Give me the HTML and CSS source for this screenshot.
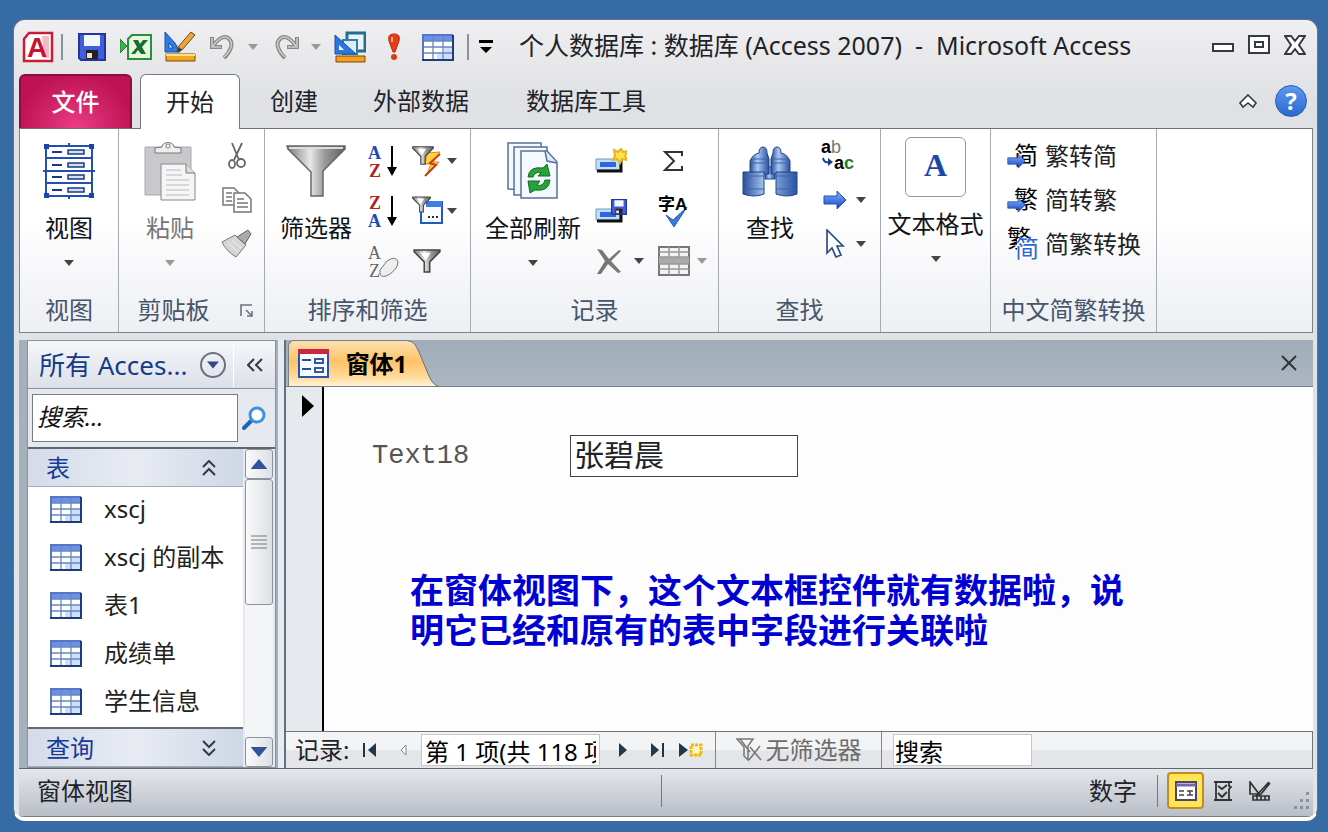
FILE: index.html
```html
<!DOCTYPE html>
<html lang="zh-CN">
<head>
    <meta charset="UTF-8">
    <meta name="viewport" content="width=device-width, initial-scale=1.0">
    <title>个人数据库 : 数据库 (Access 2007) - Microsoft Access</title>
    <link rel="stylesheet" href="styles.css">
</head>
<body>
    <!-- shared icons -->
    <svg class="sprite" aria-hidden="true">
        <defs>
            <linearGradient id="steel" x1="0" x2="1"><stop offset="0" stop-color="#777"/><stop offset=".4" stop-color="#e8e8e8"/><stop offset=".65" stop-color="#999"/><stop offset="1" stop-color="#606060"/></linearGradient>
            <linearGradient id="blue" x1="0" y1="0" x2="0" y2="1"><stop offset="0" stop-color="#7fb6ff"/><stop offset="1" stop-color="#1743c4"/></linearGradient>
            <linearGradient id="tube" x1="0" x2="1"><stop offset="0" stop-color="#2a4d98"/><stop offset=".4" stop-color="#a9c8f5"/><stop offset="1" stop-color="#27509f"/></linearGradient>
            <linearGradient id="tabfill" x1="0" y1="0" x2="0" y2="1"><stop offset="0" stop-color="#fce0b0"/><stop offset=".45" stop-color="#ffc267"/><stop offset=".8" stop-color="#ffdb9a"/><stop offset="1" stop-color="#fff1d4"/></linearGradient>
        </defs>
        <symbol id="down" viewBox="0 0 10 6"><path d="M0 0H10L5 6Z" fill="currentColor"/></symbol>
        <symbol id="grid" viewBox="0 0 32 27">
            <path d="M1 1H31V26H1Z" fill="#fff"/><path d="M1 1H31V7H1Z" fill="#6d8fe6"/><path d="M22 13H31V26H15V19H22Z" fill="#cfe0ff"/>
            <path d="M1 7H31M1 13H31M1 19H31M11 1V26M21 1V26" stroke="#6887bd" stroke-width="1.3" fill="none"/>
            <path d="M1 26V1H31" stroke="#5577c4" stroke-width="2" fill="none"/><path d="M31 1V26H0" stroke="#1d3c7c" stroke-width="2" fill="none"/>
        </symbol>
        <symbol id="arrow" viewBox="0 0 24 20"><path d="M1 6H14V1L23 10L14 19V14H1Z" fill="url(#blue)" stroke="#2450ae"/></symbol>
        <symbol id="funnel" viewBox="0 0 60 52"><path d="M1 1H59V4L37 26V51H25V27L2 4Z" fill="url(#steel)" stroke="#666" stroke-width="1.5"/><path d="M3 3H57" stroke="#ddd" stroke-width="2"/></symbol>
        <symbol id="funnel-small" viewBox="0 0 30 26"><path d="M1 1H29V3L18 14V25H12V14L1 3Z" fill="url(#steel)" stroke="#444" stroke-width="1.6"/><path d="M8 4H19L14 12Z" fill="#fff"/></symbol>
        <symbol id="ruler" viewBox="0 0 32 32">
            <path d="M1 1V21L16 21L11 12Z" fill="#2f7be0" stroke="#1550b0"/><path d="M5 12V17H9Z" fill="#fff" stroke="#154b9b"/>
            <path d="M27 1L31 4L18 19L13 21L14 16Z" fill="#eda63a" stroke="#774611"/><path d="M13 21L15 16L18 19Z" fill="#333"/>
            <path d="M2 23H31V30H2Z" fill="#f3a71e" stroke="#774711"/><path d="M2 24H31" stroke="#ffe27a" stroke-width="2"/>
        </symbol>
        <symbol id="floppy" viewBox="0 0 28 28"><path d="M1 1H27V27H3L1 25Z" fill="#3f5edb" stroke="#25349a" stroke-width="2"/><path d="M6 2H22V13H6Z" fill="#f2f7ff"/><path d="M8 17H20V26H8Z" fill="#222"/><path d="M9 20H14V25H9Z" fill="#f6dfc5"/></symbol>
        <symbol id="undo" viewBox="0 0 26 26"><path d="M2 3V13H12M3 12C7 6 13 1 18 4C25 9 20 18 14 24" fill="none" stroke="#888" stroke-width="4"/><path d="M2 4V13H11M3 12C7 6 13 1 18 4C25 9 20 18 14 23" fill="none" stroke="#ccc" stroke-width="1.5"/></symbol>
    </svg>

    <main class="window">
        <header class="titlebar">
            <svg class="logo" viewBox="0 0 32 32"><path d="M7 2H30V30H2V8Z" fill="#fff" stroke="#c81d35" stroke-width="2.5"/><path d="M20 5H27V27H22Z" fill="#f5b9c4"/><text x="5" y="26" class="logo-letter">A</text></svg>
            <span class="divider"></span>
            <nav class="quick" aria-label="快速访问工具栏">
                <button aria-label="保存"><svg width="28" height="28"><use href="#floppy"/></svg></button>
                <button aria-label="导出到 Excel"><svg width="32" height="28" viewBox="0 0 32 28"><path d="M12 2H31V26H8V6Z" fill="#eaf6df" stroke="#24913e" stroke-width="2"/><path d="M13 7H18L20 11L23 7H28L22 14L26 21H21L18 17L15 21H11L17 14Z" fill="#176f2e"/><path d="M0 6L7 13L0 20Z" fill="#3bb54a" stroke="#157b27"/></svg></button>
                <button aria-label="设计视图"><svg width="32" height="32"><use href="#ruler"/></svg></button>
                <button class="split" aria-label="撤消"><svg width="26" height="26"><use href="#undo"/></svg><svg class="caret pale"><use href="#down"/></svg></button>
                <button class="split" aria-label="恢复"><svg class="flip" width="26" height="26"><use href="#undo"/></svg><svg class="caret pale"><use href="#down"/></svg></button>
                <button aria-label="窗体设计"><svg width="32" height="32" viewBox="0 0 32 32"><path d="M13 2H31V20H13Z" fill="#e9f5fb" stroke="#246f91" stroke-width="3"/><path d="M9 9H23V23H9Z" fill="#dceef9" stroke="#327ea5" stroke-width="2"/><path d="M1 4V23H22Z" fill="#2c76dc" stroke="#1550ae"/><path d="M5 14V19H10Z" fill="#fff"/><path d="M2 25H31V31H2Z" fill="#f4a01c" stroke="#7c4410"/></svg></button>
                <button aria-label="运行"><svg width="14" height="28" viewBox="0 0 14 28"><path d="M7 1C12 1 13 4 12 8L8 19H6L2 8C1 4 2 1 7 1Z" fill="#ea3b14" stroke="#b62a11"/><circle cx="7" cy="24" r="3" fill="#df3814"/><path d="M5 4V9" stroke="#ffac75" stroke-width="2"/></svg></button>
                <button aria-label="数据表视图"><svg width="32" height="27"><use href="#grid"/></svg></button>
            </nav>
            <span class="divider"></span>
            <button class="customize" aria-label="自定义快速访问工具栏"><svg width="16" height="14" viewBox="0 0 16 14"><path d="M1 0H15V3H1ZM2 7H14L8 13Z"/></svg></button>
            <h1>个人数据库 : 数据库 (Access 2007)&nbsp; -&nbsp; Microsoft Access</h1>
            <div class="window-controls">
                <button aria-label="最小化"><svg width="22" height="22" viewBox="0 0 22 22"><path d="M1 10H21V17H1Z"/></svg></button>
                <button aria-label="还原"><svg width="22" height="22" viewBox="0 0 22 22"><path d="M1 2H21V19H1ZM7 8H15V13H7Z"/></svg></button>
                <button aria-label="关闭"><svg width="22" height="22" viewBox="0 0 22 22"><path d="M1 2H7L11 7L15 2H21L15 11L21 20H15L11 15L7 20H1L7 11Z"/></svg></button>
            </div>
        </header>

        <nav class="tabs" aria-label="功能区">
            <button class="tab file">文件</button>
            <button class="tab active">开始</button>
            <button class="tab">创建</button>
            <button class="tab wide">外部数据</button>
            <button class="tab wider">数据库工具</button>
            <div class="tabs-end">
                <button aria-label="折叠功能区"><svg width="18" height="16" viewBox="0 0 18 16"><path d="M9 2L17 10L14 14L9 10L4 14L1 10Z" fill="#fff" stroke="#333c46" stroke-width="1.6"/></svg></button>
                <button class="help" aria-label="帮助">?</button>
            </div>
        </nav>

        <section class="ribbon">
            <section class="group g-view">
                <div class="tools">
                    <button class="big">
                        <svg width="52" height="58" viewBox="0 0 52 58"><path d="M3 4H49V54H3ZM3 16H49M3 29H49M3 41H49M26 1V4M26 54V57M0 29H3M49 29H52" fill="none" stroke="#2350b0" stroke-width="2"/><path d="M9 10H19M9 23H19M9 35H19M9 48H19" stroke="#1b3b83" stroke-width="2"/><path d="M25 8H41V12H25ZM25 21H41V25H25ZM25 33H41V37H25ZM25 46H41V50H25Z" fill="#cfe1fa" stroke="#1b3b83" stroke-width="1.5"/><path d="M1 2H6V7H1ZM46 2H51V7H46ZM1 51H6V56H1ZM46 51H51V56H46Z" fill="#1745ae"/></svg>
                        <span>视图</span><svg class="caret"><use href="#down"/></svg>
                    </button>
                </div>
                <h2>视图</h2>
            </section>
            <section class="group g-clip">
                <div class="tools">
                    <button class="big faded">
                        <svg width="52" height="60" viewBox="0 0 52 60"><path d="M1 6H47V54H1Z" fill="#c9c9cd" stroke="#aaa"/><path d="M11 12V7L18 6C18 0 30 0 30 6L37 7V12Z" fill="#eee" stroke="#777"/><circle cx="24" cy="5" r="2" fill="#fff" stroke="#777"/><path d="M17 23H42L51 32V59H17Z" fill="#f5f5f7" stroke="#888"/><path d="M42 23V32H51" fill="#ddd" stroke="#777"/><path d="M22 29H37M22 34H38M22 39H45M22 44H45M22 49H45M22 54H45" stroke="#bbb"/></svg>
                        <span>粘贴</span><svg class="caret pale"><use href="#down"/></svg>
                    </button>
                    <div class="small-col tight">
                        <button aria-label="剪切"><svg width="20" height="28" viewBox="0 0 20 28" fill="none" stroke="#666" stroke-width="1.8"><path d="M5 1L12 18M15 1L7 18"/><ellipse cx="5" cy="22" rx="3" ry="4"/><ellipse cx="14" cy="21" rx="4" ry="4"/></svg></button>
                        <button aria-label="复制"><svg width="30" height="26" viewBox="0 0 30 26" fill="#fff" stroke="#777" stroke-width="1.5"><path d="M1 1H12L17 6V18H1Z"/><path d="M12 6H23L29 12V25H12Z"/><path d="M4 6H10M4 10H10M4 14H10M15 12H22M15 16H26M15 20H26"/></svg></button>
                        <button aria-label="格式刷"><svg width="32" height="30" viewBox="0 0 32 30"><path d="M1 13L14 6L25 16L15 28Q5 22 1 13Z" fill="#d6d6d6" stroke="#777"/><path d="M16 8L27 1L30 5L24 15Z" fill="#aaa" stroke="#666"/><path d="M7 14L17 23M11 11L20 19" stroke="#eee"/></svg></button>
                    </div>
                </div>
                <h2>剪贴板</h2>
                <button class="launcher" aria-label="剪贴板选项"><svg width="14" height="14" viewBox="0 0 14 14"><path d="M1 12V1H12M6 6L12 12M12 7V12H7" fill="none" stroke="#677483" stroke-width="1.6"/></svg></button>
            </section>
            <section class="group g-sort">
                <div class="tools">
                    <button class="big"><svg width="60" height="60" viewBox="0 -4 60 60"><use href="#funnel" width="60" height="52"/></svg><span>筛选器</span></button>
                    <div class="small-col">
                        <button aria-label="升序"><svg width="32" height="36" viewBox="0 0 32 36"><text x="1" y="16" class="az blue-t">A</text><text x="2" y="34" class="az red-t">Z</text><path d="M25 3V26" stroke="#000" stroke-width="2"/><path d="M20 24H30L25 33Z"/></svg></button>
                        <button aria-label="降序"><svg width="32" height="36" viewBox="0 0 32 36"><text x="2" y="16" class="az red-t">Z</text><text x="1" y="34" class="az blue-t">A</text><path d="M25 3V26" stroke="#000" stroke-width="2"/><path d="M20 24H30L25 33Z"/></svg></button>
                        <button aria-label="取消排序"><svg width="32" height="36" viewBox="0 0 32 36"><text x="1" y="16" class="az thin-t">A</text><text x="2" y="34" class="az thin-t">Z</text><path d="M13 27L20 18Q29 12 31 19Q31 25 23 31Q15 36 13 31Z" fill="#eee" stroke="#777"/></svg></button>
                    </div>
                    <div class="small-col carets">
                        <button aria-label="选择"><svg width="30" height="32" viewBox="0 0 30 32"><path d="M15 8L28 7L21 17H27L14 31L19 19H13Z" fill="#ffd23c" stroke="#dd852a"/><path d="M28 9L18 18L24 20L13 31" fill="none" stroke="#ca3b17" stroke-width="2"/><use href="#funnel-small" x="0" y="1" width="22" height="19"/></svg><svg class="caret"><use href="#down"/></svg></button>
                        <button aria-label="高级"><svg width="31" height="32" viewBox="0 0 31 32"><path d="M9 7H30V28H9Z" fill="#f8fbff" stroke="#2458be" stroke-width="2"/><path d="M14 6H30V12H14Z" fill="#3c7ee4"/><path d="M16 22H18M20 22H22M24 22H26" stroke="#234" stroke-width="2"/><use href="#funnel-small" x="0" y="1" width="19" height="17"/></svg><svg class="caret"><use href="#down"/></svg></button>
                        <button aria-label="切换筛选"><svg width="30" height="24"><use href="#funnel-small"/></svg></button>
                    </div>
                </div>
                <h2>排序和筛选</h2>
            </section>
            <section class="group g-records">
                <div class="tools">
                    <button class="big">
                        <svg width="52" height="58" viewBox="0 0 52 58"><g fill="#f5f9ff" stroke="#55719b" stroke-width="1.5"><path d="M1 1H34V49L1 47Z"/><path d="M7 5H40V53H7Z"/><path d="M14 9H40L50 20V56H14Z"/><path d="M38 9L40 19L50 21" fill="#dceaff"/></g><path d="M21 35Q22 24 36 26L40 22L43 34H31L34 31Q28 29 26 35Z" fill="#27a33a" stroke="#116a22"/><path d="M43 38Q42 50 28 48L23 51L21 39H33L30 43Q36 45 38 38Z" fill="#27a33a" stroke="#116a22"/></svg>
                        <span>全部刷新</span><svg class="caret"><use href="#down"/></svg>
                    </button>
                    <div class="small-col carets">
                        <button aria-label="新建"><svg width="32" height="26" viewBox="0 0 32 26"><path d="M1 11H25V22H1Z" fill="#bfe2fb" stroke="#6e98c0"/><path d="M5 14H21V19H5Z" fill="#2e66df"/><path d="M2 23H26V12" fill="none" stroke="#111" stroke-width="3"/><path d="M19 2L23 4L26 1L28 4L32 3L30 8L32 12L27 11L25 15L22 11L18 12L20 8Z" fill="#ffe157" stroke="#eab316" stroke-width="2"/></svg></button>
                        <button aria-label="保存记录"><svg width="32" height="26" viewBox="0 0 32 26"><path d="M1 11H25V22H1Z" fill="#bfe2fb" stroke="#6e98c0"/><path d="M5 14H21V19H5Z" fill="#2e66df"/><path d="M2 23H26V12" fill="none" stroke="#111" stroke-width="3"/><use href="#floppy" x="16" y="1" width="16" height="16"/></svg></button>
                        <button aria-label="删除"><svg width="28" height="28" viewBox="0 0 26 28"><path d="M1 2L6 3L13 12L23 3L25 4L15 14L25 25L22 26L12 17L5 27H1L9 14Z" fill="#777"/></svg><svg class="caret"><use href="#down"/></svg></button>
                    </div>
                    <div class="small-col carets">
                        <button aria-label="合计"><svg width="32" height="26" viewBox="0 0 32 26"><path d="M24 8V4H7L16 13L7 22H24V18" fill="none" stroke="#333" stroke-width="2"/></svg></button>
                        <button aria-label="拼写检查"><svg width="32" height="36" viewBox="0 0 32 36"><path d="M8 22L15 27L29 14L16 34Z" fill="#3b78e0" stroke="#2b5ebf"/><text x="0" y="17" class="spell">字A</text></svg></button>
                        <button class="faded" aria-label="其他"><svg width="32" height="30" viewBox="0 0 32 30"><path d="M1 1H31V29H1Z" fill="#f3f3f3" stroke="#777" stroke-width="2"/><path d="M1 11H31V18H1Z" fill="#aaa"/><path d="M1 6H31M1 11H31M1 18H31M1 23H31M11 1V11M21 1V11M11 18V29M21 18V29" stroke="#999" stroke-width="1.5"/></svg><svg class="caret pale"><use href="#down"/></svg></button>
                    </div>
                </div>
                <h2>记录</h2>
            </section>
            <section class="group g-find">
                <div class="tools">
                    <button class="big">
                        <svg width="56" height="56" viewBox="0 0 56 56"><g stroke="#1f4389" fill="url(#tube)"><path d="M23 24H33V36H23Z"/><path d="M17 10Q17 4 21 4Q25 4 25 10L27 16V31H8V18Q11 11 17 10Z"/><path d="M31 10Q31 4 35 4Q39 4 39 10Q45 11 48 18V31H29V16Z"/><path d="M1 29H22V51Q12 55 1 51ZM34 29H55V51Q45 55 34 51Z"/></g><path d="M11 16H25M31 16H45M8 20H26M30 20H48M1 33H22M34 33H55M1 46H22M34 46H55" stroke="#3b62b2"/></svg>
                        <span>查找</span>
                    </button>
                    <div class="small-col tight carets">
                        <button aria-label="替换"><svg width="34" height="36" viewBox="0 0 34 36"><text x="0" y="15" class="swap">a<tspan class="light">b</tspan></text><path d="M2 20Q3 25 8 24" fill="none" stroke="#173e93" stroke-width="2"/><path d="M7 20L12 24L7 28Z" fill="#173e93"/><text x="13" y="31" class="swap">a<tspan class="green">c</tspan></text></svg></button>
                        <button aria-label="转至"><svg width="26" height="20" viewBox="-2 0 26 20"><use href="#arrow" width="24" height="20"/></svg><svg class="caret"><use href="#down"/></svg></button>
                        <button aria-label="选择"><svg width="24" height="30" viewBox="-4 0 24 30"><path d="M2 1V24L7 19L11 28L16 26L12 17H18Z" fill="#fff" stroke="#2c4d80" stroke-width="1.7"/></svg><svg class="caret"><use href="#down"/></svg></button>
                    </div>
                </div>
                <h2>查找</h2>
            </section>
            <section class="group g-format">
                <div class="tools">
                    <button class="big"><span class="letter-box">A</span><span>文本格式</span><svg class="caret"><use href="#down"/></svg></button>
                </div>
            </section>
            <section class="group g-chinese">
                <div class="tools">
                    <div class="text-col">
                        <button><svg width="32" height="36" viewBox="0 0 32 36"><text x="7" y="26" class="han">简</text><use href="#arrow" x="0" y="15" width="19" height="16"/></svg>繁转简</button>
                        <button><svg width="32" height="36" viewBox="0 0 32 36"><text x="7" y="26" class="han">繁</text><use href="#arrow" x="0" y="15" width="19" height="16"/></svg>简转繁</button>
                        <button><svg width="32" height="36" viewBox="0 0 32 36"><text x="0" y="21" class="han">繁</text><path d="M10 13H30V33H10Z" fill="#fff"/><text x="8" y="31" class="han blue-han">简</text></svg>简繁转换</button>
                    </div>
                </div>
                <h2>中文简繁转换</h2>
            </section>
        </section>

        <div class="workspace">
            <aside class="nav-pane">
                <div class="pane-head">
                    <span class="pane-title">所有 Acces...</span>
                    <button class="round" aria-label="浏览类别"><svg width="12" height="8"><use href="#down"/></svg></button>
                    <button class="shutter" aria-label="收起导航窗格"><svg width="16" height="14" viewBox="0 0 16 14"><path d="M7 1L1 7L7 13M15 1L9 7L15 13"/></svg></button>
                </div>
                <div class="pane-search">
                    <input type="text" placeholder="搜索..." aria-label="搜索">
                    <button aria-label="搜索"><svg width="24" height="24" viewBox="0 0 24 24"><path d="M2 22L10 14" stroke="#1c62b8" stroke-width="4" stroke-linecap="round"/><circle cx="15" cy="9" r="7" fill="#fff" stroke="#3c93e0" stroke-width="3"/></svg></button>
                </div>
                <div class="pane-body">
                    <div class="objects">
                        <button class="category">表<svg width="16" height="16" viewBox="0 0 16 16"><path d="M2 7L8 1L14 7M2 15L8 9L14 15"/></svg></button>
                        <ul>
                            <li><a href="#"><svg width="32" height="27"><use href="#grid"/></svg>xscj</a></li>
                            <li><a href="#"><svg width="32" height="27"><use href="#grid"/></svg>xscj 的副本</a></li>
                            <li><a href="#"><svg width="32" height="27"><use href="#grid"/></svg>表1</a></li>
                            <li><a href="#"><svg width="32" height="27"><use href="#grid"/></svg>成绩单</a></li>
                            <li><a href="#"><svg width="32" height="27"><use href="#grid"/></svg>学生信息</a></li>
                        </ul>
                        <button class="category queries">查询<svg width="16" height="16" viewBox="0 0 16 16"><path d="M2 1L8 7L14 1M2 9L8 15L14 9"/></svg></button>
                    </div>
                    <div class="scrollbar">
                        <button aria-label="向上滚动"><svg class="flip-y" width="18" height="10"><use href="#down" width="18" height="10"/></svg></button>
                        <div class="thumb"><svg width="16" height="14" viewBox="0 0 16 14"><path d="M0 1H16M0 5H16M0 9H16M0 13H16" stroke="#777"/></svg></div>
                        <button class="scroll-down" aria-label="向下滚动"><svg width="18" height="10"><use href="#down" width="18" height="10"/></svg></button>
                    </div>
                </div>
            </aside>

            <section class="document">
                <div class="doc-tabs">
                    <button class="doc-tab">
                        <svg width="32" height="30" viewBox="0 0 32 30"><path d="M1 2H30V28H1Z" fill="#f7faff" stroke="#2754ae" stroke-width="2"/><path d="M0 0H31V5H0Z" fill="#c8273d"/><path d="M4 11H13M4 20H13" stroke="#244e9b" stroke-width="2"/><path d="M17 10H25V14H17ZM17 19H25V23H17Z" fill="#fff" stroke="#3159a1" stroke-width="2"/></svg>
                        窗体1
                    </button>
                    <svg class="tab-tail" width="30" height="46" viewBox="0 0 30 46"><path d="M0 1C6 1 8 6 11 12L21 36Q25 45 30 46H0Z" fill="url(#tabfill)"/><path d="M0 1C6 1 8 6 11 12L21 36Q25 45 30 46" fill="none" stroke="#64717f"/></svg>
                    <button class="doc-close" aria-label="关闭窗体"><svg width="16" height="16" viewBox="0 0 16 16"><path d="M1 1L15 15M15 1L1 15" stroke="#333" stroke-width="2"/></svg></button>
                </div>
                <div class="form-view">
                    <div class="selector"><svg width="12" height="22" viewBox="0 0 12 22"><path d="M0 0L12 11L0 22Z"/></svg></div>
                    <div class="form-body">
                        <div class="field">
                            <label for="text18">Text18</label>
                            <input id="text18" type="text" value="张碧晨">
                        </div>
                        <p class="note">在窗体视图下，这个文本框控件就有数据啦，说明它已经和原有的表中字段进行关联啦</p>
                    </div>
                </div>
                <div class="record-nav">
                    <label for="record">记录:</label>
                    <button aria-label="第一条记录"><svg width="14" height="14" viewBox="0 0 14 14"><path d="M1 0V14" stroke="#234" stroke-width="2"/><path d="M13 0V14L5 7Z"/></svg></button>
                    <button class="prev" aria-label="上一条记录"><svg width="8" height="14" viewBox="0 0 8 14"><path d="M6 2V12L1 7Z" fill="#fff" stroke="#888"/></svg></button>
                    <input id="record" type="text" value="第 1 项(共 118 项)">
                    <button aria-label="下一条记录"><svg width="10" height="14" viewBox="0 0 10 14"><path d="M1 0V14L9 7Z"/></svg></button>
                    <button aria-label="最后一条记录"><svg width="14" height="14" viewBox="0 0 14 14"><path d="M13 0V14" stroke="#234" stroke-width="2"/><path d="M1 0V14L9 7Z"/></svg></button>
                    <button aria-label="新记录"><svg width="26" height="16" viewBox="0 0 26 16"><path d="M1 1V15L10 8Z"/><path d="M13 3H23V13H13Z" fill="#fff8c6" stroke="#f2b51b" stroke-width="3" stroke-dasharray="3 1"/></svg></button>
                    <button class="no-filter" disabled><svg width="26" height="24" viewBox="0 0 26 24" fill="none" stroke="#777" stroke-width="1.5"><path d="M1 1H17L12 8V22L8 18V9ZM4 1L14 14M14 9L25 22M24 8L13 22"/></svg>无筛选器</button>
                    <input class="record-search" type="text" value="搜索" aria-label="搜索记录">
                </div>
            </section>
        </div>

        <footer class="status">
            <span class="mode">窗体视图</span>
            <span class="num">数字</span>
            <div class="views">
                <button class="current" aria-label="窗体视图"><svg width="24" height="20" viewBox="0 0 22 20"><path d="M1 1H21V19H1Z" fill="#fff" stroke="#4c4669" stroke-width="2"/><path d="M1 4H21" stroke="#7a63b5" stroke-width="3"/><path d="M4 10H9M4 14H9M12 10H18M12 14H18M15 10V14" stroke="#444" stroke-width="1.5"/></svg></button>
                <button aria-label="布局视图"><svg width="18" height="20" viewBox="0 0 18 20" fill="none" stroke="#333" stroke-width="1.8"><path d="M0 1H18M0 19H18M2 1V19M15 1V5L17 6L15 8V19M4 5L8 8L13 4M4 12L8 16L13 11"/></svg></button>
                <button aria-label="设计视图"><svg width="22" height="20" viewBox="0 0 22 20" fill="none" stroke="#333" stroke-width="1.7"><path d="M1 1V13L10 13ZM20 1L8 14L12 13L21 2M4 15H20V19H4ZM8 15V19M12 15V19M16 15V19"/></svg></button>
            </div>
            <svg class="grip" width="20" height="22" viewBox="0 0 20 22" fill="#8b929d"><path d="M14 2H17V5H14ZM8 9H11V12H8ZM14 9H17V12H14ZM2 16H5V19H2ZM8 16H11V19H8ZM14 16H17V19H14Z"/></svg>
        </footer>
    </main>
</body>
</html>
```

FILE: styles.css
```css
* {
    box-sizing: border-box;
}

body {
    margin: 0;
    min-height: 100vh;
    display: flex;
    padding: 19px 10px 11px 13px;
    background: #376ba4;
    font-family: "Noto Sans", "Noto Sans CJK SC", sans-serif;
    font-size: 24px;
    line-height: 32px;
    color: #1d2329;
}

button, input {
    font: inherit;
    color: inherit;
}

button {
    display: flex;
    align-items: center;
    justify-content: center;
    padding: 0;
    border: 0;
    background: none;
    white-space: nowrap;
}

svg {
    flex: none;
}

h1, h2, ul, p {
    margin: 0;
    padding: 0;
    font-weight: 400;
}

.sprite {
    position: absolute;
    width: 0;
    height: 0;
}

.window {
    flex: 1;
    min-width: 0;
    display: flex;
    flex-direction: column;
    border: 1px solid #657589;
    border-bottom: 4px solid #fff;
    border-radius: 12px;
    padding: 0 4px 0 5px;
    background: linear-gradient(#f0eff1, #dfe1e4 80px, #e1e5e9);
    overflow: hidden;
}

/* title bar */
.titlebar {
    display: flex;
    align-items: center;
    height: 54px;
    padding-left: 3px;
}

.logo {
    width: 32px;
    height: 32px;
}

.logo-letter {
    font: bold 28px "Liberation Sans", sans-serif;
    fill: #c3152f;
}

.divider {
    width: 2px;
    height: 26px;
    margin: 0 7px;
    background: #89929b;
}

.quick {
    display: flex;
}

.quick button {
    width: 44px;
}

.quick .split {
    width: 63px;
    gap: 12px;
}

.flip {
    transform: scaleX(-1);
}

.flip-y {
    transform: scaleY(-1);
}

.caret {
    width: 10px;
    height: 6px;
    color: #444;
}

.caret.pale {
    color: #999;
}

.customize {
    width: 20px;
}

h1 {
    margin-left: 23px;
    padding-bottom: 4px;
    font-size: 25px;
    white-space: nowrap;
}

.window-controls {
    display: flex;
    gap: 14px;
    margin-left: auto;
    padding: 0 7px 4px 0;
}

.window-controls svg {
    fill: #fff;
    stroke: #343b44;
    stroke-width: 2;
}

/* ribbon tabs */
.tabs {
    display: flex;
    height: 55px;
    border-bottom: 1px solid #6d7680;
}

.tab {
    width: 108px;
}

.tab.file {
    width: 113px;
    margin-right: 8px;
    border: 2px solid #8e0c42;
    border-bottom: 0;
    border-radius: 6px 6px 0 0;
    background: radial-gradient(ellipse at bottom, #ec3d83, #bd1254 75%);
    color: #fff;
    font-weight: 500;
}

.tab.active {
    width: 100px;
    height: 55px;
    border: 1px solid #707b85;
    border-bottom: 0;
    border-radius: 6px 6px 0 0;
    background: #fff;
}

.tab.wide {
    width: 146px;
}

.tab.wider {
    width: 184px;
}

.tabs-end {
    display: flex;
    align-items: center;
    gap: 18px;
    margin-left: auto;
    padding-right: 6px;
}

.help {
    width: 32px;
    height: 32px;
    border: 1px solid #275cb8;
    border-radius: 50%;
    background: linear-gradient(#5b9af0, #2c68d0);
    color: #fff;
    font-weight: 700;
}

/* ribbon */
.ribbon {
    display: flex;
    height: 204px;
    border: 1px solid #7c858f;
    border-top: 0;
    background: linear-gradient(#fff 45%, #fafafc 60%, #edeff3);
}

.group {
    position: relative;
    display: flex;
    flex-direction: column;
    border-right: 1px solid #a4abb4;
}

.tools {
    display: flex;
    flex: 1;
}

.group h2 {
    height: 38px;
    font-size: 24px;
    color: #46566c;
    text-align: center;
    white-space: nowrap;
}

.g-view { width: 99px; }
.g-clip { width: 146px; }
.g-sort { width: 206px; }
.g-records { width: 248px; }
.g-find { width: 162px; }
.g-format { width: 110px; }
.g-chinese { width: 166px; }

.g-clip h2 {
    padding-right: 36px;
}

.big {
    flex-direction: column;
    justify-content: flex-start;
    width: 102px;
    padding-top: 12px;
    color: #101418;
}

.g-view .big {
    width: 98px;
}

.g-records .big {
    width: 124px;
}

.g-format .big {
    width: 109px;
    padding-top: 8px;
}

.big span {
    height: 32px;
    margin-top: 11px;
}

.big .caret {
    margin-top: 16px;
}

.big > svg:first-child {
    height: 60px;
}

.faded {
    color: #777;
}

.letter-box {
    width: 61px;
    border: 1px solid #9098a2;
    border-radius: 6px;
    background: #fff;
    color: #1b48a6;
    font: bold 32px/54px "Liberation Serif", serif;
}

.big .letter-box {
    height: 60px;
    margin-top: 0;
}

.small-col {
    display: flex;
    flex-direction: column;
    padding-top: 7px;
}

.small-col button {
    width: 32px;
    height: 50px;
}

.small-col.carets button {
    width: 45px;
    justify-content: space-between;
}

.small-col.tight {
    padding-top: 5px;
}

.small-col.tight button {
    height: 44px;
}

.g-sort .carets {
    margin-left: 13px;
}

.small-col.carets + .carets {
    margin-left: 14px;
}

.g-records .carets button {
    width: 49px;
}

.az {
    font: bold 18px/18px "Liberation Serif", serif;
}

.blue-t {
    fill: #1c49b5;
}

.red-t {
    fill: #b2231f;
}

.thin-t {
    font-weight: 400;
    fill: #666;
}

.spell {
    font: bold 17px "Liberation Sans", "Noto Sans CJK SC", sans-serif;
}

.swap {
    font: bold 18px "Liberation Sans", sans-serif;
}

.swap .light {
    font-weight: 400;
    fill: #777;
}

.swap .green {
    fill: #188128;
}

.launcher {
    position: absolute;
    right: 10px;
    bottom: 14px;
}

.text-col {
    padding: 5px 0 0 16px;
}

.text-col button {
    height: 44px;
    gap: 6px;
}

.han {
    font: 24px "Noto Sans CJK SC", sans-serif;
}

.blue-han {
    fill: #2b66d7;
}

/* workspace */
.workspace {
    flex: 1;
    display: flex;
    margin-top: 7px;
    padding-left: 8px;
    border-bottom: 1px solid #5d6874;
    background: #a4b1bc;
    min-height: 0;
}

.nav-pane {
    width: 249px;
    display: flex;
    flex-direction: column;
    border: 1px solid #88929e;
    background: #e6eaf0;
}

.pane-head {
    display: flex;
    align-items: center;
    height: 48px;
    border-bottom: 1px solid #8792a0;
    padding-left: 11px;
    background: linear-gradient(#f5f6f9, #dce0e8);
    color: #143a8a;
}

.pane-title {
    width: 161px;
    font-size: 26px;
    white-space: nowrap;
}

.round {
    width: 26px;
    height: 26px;
    border: 2px solid #69727e;
    border-radius: 50%;
    color: #35468a;
}

.shutter {
    flex: 1;
    height: 44px;
    margin-left: 7px;
    border-left: 1px solid #fff;
}

.shutter svg, .category svg {
    fill: none;
    stroke: #333b46;
    stroke-width: 2;
}

.pane-search {
    display: flex;
    align-items: center;
    gap: 4px;
    height: 60px;
    padding: 0 4px;
    border-bottom: 2px solid #5d6671;
}

.pane-search input {
    width: 206px;
    height: 48px;
    border: 1px solid #747d88;
    padding: 0 4px 4px;
    background: #fff;
}

.pane-search input::placeholder {
    color: #111;
    font-style: italic;
    opacity: 1;
}

.pane-body {
    flex: 1;
    display: flex;
}

.objects {
    width: 215px;
    display: flex;
    flex-direction: column;
    background: #fff;
}

.category {
    justify-content: space-between;
    height: 38px;
    padding: 0 26px 0 18px;
    border-bottom: 1px solid #a3abb7;
    background: linear-gradient(90deg, #d4dbe9, #e8ebf2 50%, #cfd7e6);
    color: #143a9a;
}

.category.queries {
    height: 40px;
    margin-top: auto;
    border-top: 2px solid #626a78;
}

.objects ul {
    list-style: none;
}

.objects a {
    display: flex;
    align-items: center;
    gap: 22px;
    height: 48px;
    padding: 0 0 4px 22px;
    color: #222;
    text-decoration: none;
}

.scrollbar {
    flex: 1;
    display: flex;
    flex-direction: column;
    margin: 0 2px;
    background: #f4f5f7;
}

.scrollbar button, .thumb {
    height: 30px;
    border: 1px solid #8b929e;
    border-radius: 3px;
    background: linear-gradient(90deg, #fafafa, #dcdfe5);
    color: #34519c;
}

.thumb {
    display: flex;
    align-items: center;
    justify-content: center;
    height: 126px;
}

.scrollbar .scroll-down {
    margin-top: auto;
}

.document {
    flex: 1;
    min-width: 0;
    display: flex;
    flex-direction: column;
    margin-left: 8px;
    border-left: 2px solid #64717f;
    box-shadow: -6px 0 #e8ecf0;
}

.doc-tabs {
    display: flex;
    height: 47px;
    padding-left: 2px;
    border-bottom: 1px solid #73808d;
    background: linear-gradient(#a0adb8, #abb6c0);
}

.doc-tab {
    gap: 16px;
    width: 120px;
    padding-left: 8px;
    border: 1px solid #78818b;
    border-width: 1px 0 0 1px;
    border-radius: 6px 0 0 0;
    background: linear-gradient(#fce0b0, #ffc267 45%, #ffdb9a 80%, #fff1d4);
    color: #000;
    font-weight: 700;
}

.doc-close {
    width: 48px;
    margin-left: auto;
}

.form-view {
    flex: 1;
    display: flex;
    background: #fdfdfd;
}

.selector {
    width: 38px;
    padding: 5px 0 0 16px;
    border-right: 2px solid #000;
    background: #e6eaee;
}

.form-body {
    flex: 1;
    padding: 48px 48px 0;
}

.field {
    display: flex;
    align-items: center;
}

.field label {
    width: 198px;
    font: 27px "Liberation Mono", monospace;
    color: #555;
}

.field input {
    width: 228px;
    height: 42px;
    border: 1px solid #444;
    padding: 0 3px 6px;
    background: #fff;
    font-size: 30px;
}

.note {
    max-width: 760px;
    margin-top: 93px;
    padding-left: 38px;
    color: #0000d4;
    font-size: 34px;
    font-weight: 700;
    line-height: 40px;
}

/* record navigator */
.record-nav {
    display: flex;
    align-items: center;
    height: 37px;
    border-top: 1px solid #6d7782;
    border-right: 1px solid #6d7782;
    padding-left: 9px;
    background: linear-gradient(#f3f4f6 48%, #e3e5e9 52%);
    fill: #21384f;
}

.record-nav label {
    width: 58px;
}

.record-nav button {
    width: 34px;
    height: 36px;
}

.record-nav input {
    width: 179px;
    height: 32px;
    padding: 3px 3px 0;
    border: 1px solid #c4c8ce;
    background: #fff;
    color: #000;
}

.record-nav input[id] {
    margin-right: 6px;
}

.record-nav .no-filter {
    width: 167px;
    gap: 4px;
    margin-left: 7px;
    border: 1px solid #7d8792;
    border-width: 0 1px;
    color: #6c6c6c;
}

.record-nav .record-search {
    width: 139px;
    margin-left: 11px;
    padding-left: 1px;
}

/* status bar */
.status {
    display: flex;
    align-items: center;
    height: 48px;
    padding: 0 1px 4px 18px;
    border-bottom: 1px solid #7b7b80;
    background: linear-gradient(#e4e7eb, #b9bec7);
}

.mode {
    flex: 0 0 49%;
    border-right: 1px solid #707883;
}

.num {
    margin-left: auto;
    padding-right: 20px;
    border-right: 1px solid #707883;
}

.views {
    display: flex;
    margin: 0 14px 0 9px;
}

.views button {
    width: 37px;
    height: 37px;
}

.views .current {
    border: 2px solid #c78a20;
    border-radius: 4px;
    background: #ffe453;
}

.grip {
    align-self: flex-end;
}
```
